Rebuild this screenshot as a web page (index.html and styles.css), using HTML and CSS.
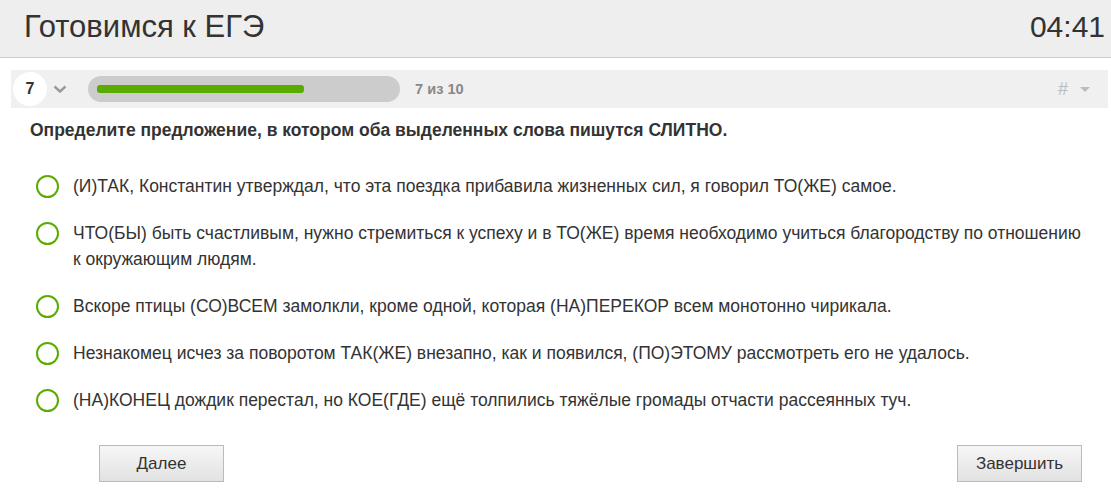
FILE: index.html
```html
<!DOCTYPE html>
<html lang="ru">
<head>
<meta charset="utf-8">
<link rel="stylesheet" href="styles.css">
</head>
<body>
<header class="top">
  <h1 class="title">Готовимся к ЕГЭ</h1>
  <div class="timer">04:41</div>
</header>
<div class="nav">
  <div class="num">7</div>
  <svg class="chev" width="14" height="8" viewBox="0 0 14 8"><path d="M1.5 1.5 L7 6.5 L12.5 1.5" fill="none" stroke="#999" stroke-width="2.4"/></svg>
  <div class="progress"><div class="fill" style="width:207px"></div></div>
  <div class="count">7 из 10</div>
  <div class="spacer"></div>
  <div class="hash">#</div>
  <svg class="caret" width="10" height="6" viewBox="0 0 10 6"><path d="M0 0 H10 L5 5 Z" fill="#b5bcc4"/></svg>
</div>
<main class="quiz">
  <p class="question">Определите предложение, в котором оба выделенных слова пишутся СЛИТНО.</p>
  <ul class="options">
    <li class="option"><span class="radio"></span><span class="text">(И)ТАК, Константин утверждал, что эта поездка прибавила жизненных сил, я говорил ТО(ЖЕ) самое.</span></li>
    <li class="option"><span class="radio"></span><span class="text">ЧТО(БЫ) быть счастливым, нужно стремиться к успеху и в ТО(ЖЕ) время необходимо учиться благородству по отношению к окружающим людям.</span></li>
    <li class="option"><span class="radio"></span><span class="text">Вскоре птицы (СО)ВСЕМ замолкли, кроме одной, которая (НА)ПЕРЕКОР всем монотонно чирикала.</span></li>
    <li class="option"><span class="radio"></span><span class="text">Незнакомец исчез за поворотом ТАК(ЖЕ) внезапно, как и появился, (ПО)ЭТОМУ рассмотреть его не удалось.</span></li>
    <li class="option"><span class="radio"></span><span class="text">(НА)КОНЕЦ дождик перестал, но КОЕ(ГДЕ) ещё толпились тяжёлые громады отчасти рассеянных туч.</span></li>
  </ul>
  <div class="buttons">
    <button class="btn">Далее</button>
    <button class="btn">Завершить</button>
  </div>
</main>
</body>
</html>
```
FILE: styles.css
```css
* { box-sizing: border-box; }
html, body { margin: 0; padding: 0; background: #fff; }
body { font-family: "Liberation Sans", Arial, sans-serif; color: #333; }

.top {
  height: 58px;
  background: #eee;
  border-bottom: 1px solid #ccc;
  display: flex;
  align-items: center;
  justify-content: space-between;
  padding: 0 6px 4px 24px;
}
.title { margin: 0; font-weight: normal; font-size: 31px; color: #333; }
.timer { font-size: 30px; color: #333; }

.nav {
  margin: 12px 3px 0 11px;
  height: 38px;
  background: #f0f0f0;
  display: flex;
  align-items: center;
  padding: 0 18px 0 2px;
}
.num {
  width: 34px; height: 34px; border-radius: 50%;
  background: #fff;
  display: flex; align-items: center; justify-content: center;
  font-weight: bold; font-size: 16px; color: #333;
}
.chev { margin-left: 6px; }
.progress {
  margin-left: 21px;
  width: 312px; height: 26px;
  background: #ccc; border-radius: 13px;
  padding: 9px;
}
.fill { height: 8px; background: #5aab00; border-radius: 3px; }
.count { margin-left: 15px; font-weight: bold; font-size: 14.6px; color: #888; }
.spacer { flex: 1; }
.hash { font-size: 18px; color: #b5bcc4; }
.caret { margin-left: 12px; margin-top: 2px; }

.quiz { padding: 0 0 0 30px; }
.question { margin: 12px 0 0; font-weight: bold; font-size: 17.5px; color: #333; }
.options { list-style: none; margin: 32px 0 0; padding: 0; }
.option { display: flex; align-items: flex-start; margin-bottom: 21px; font-size: 17.5px; line-height: 26px; padding-right: 26px; }
.radio {
  flex: none;
  width: 23px; height: 23px; border-radius: 50%;
  border: 2.5px solid #5aab00;
  margin: 2px 14px 0 6px;
}
.text { color: #333; }
.buttons { display: flex; justify-content: space-between; margin: 32px 29px 0 69px; }
.btn {
  width: 125px; height: 37px;
  font-family: "Liberation Sans", Arial, sans-serif;
  font-size: 17px; color: #333;
  background: linear-gradient(#f6f6f6, #e2e2e2);
  border: 1px solid #bbb;
}
```
